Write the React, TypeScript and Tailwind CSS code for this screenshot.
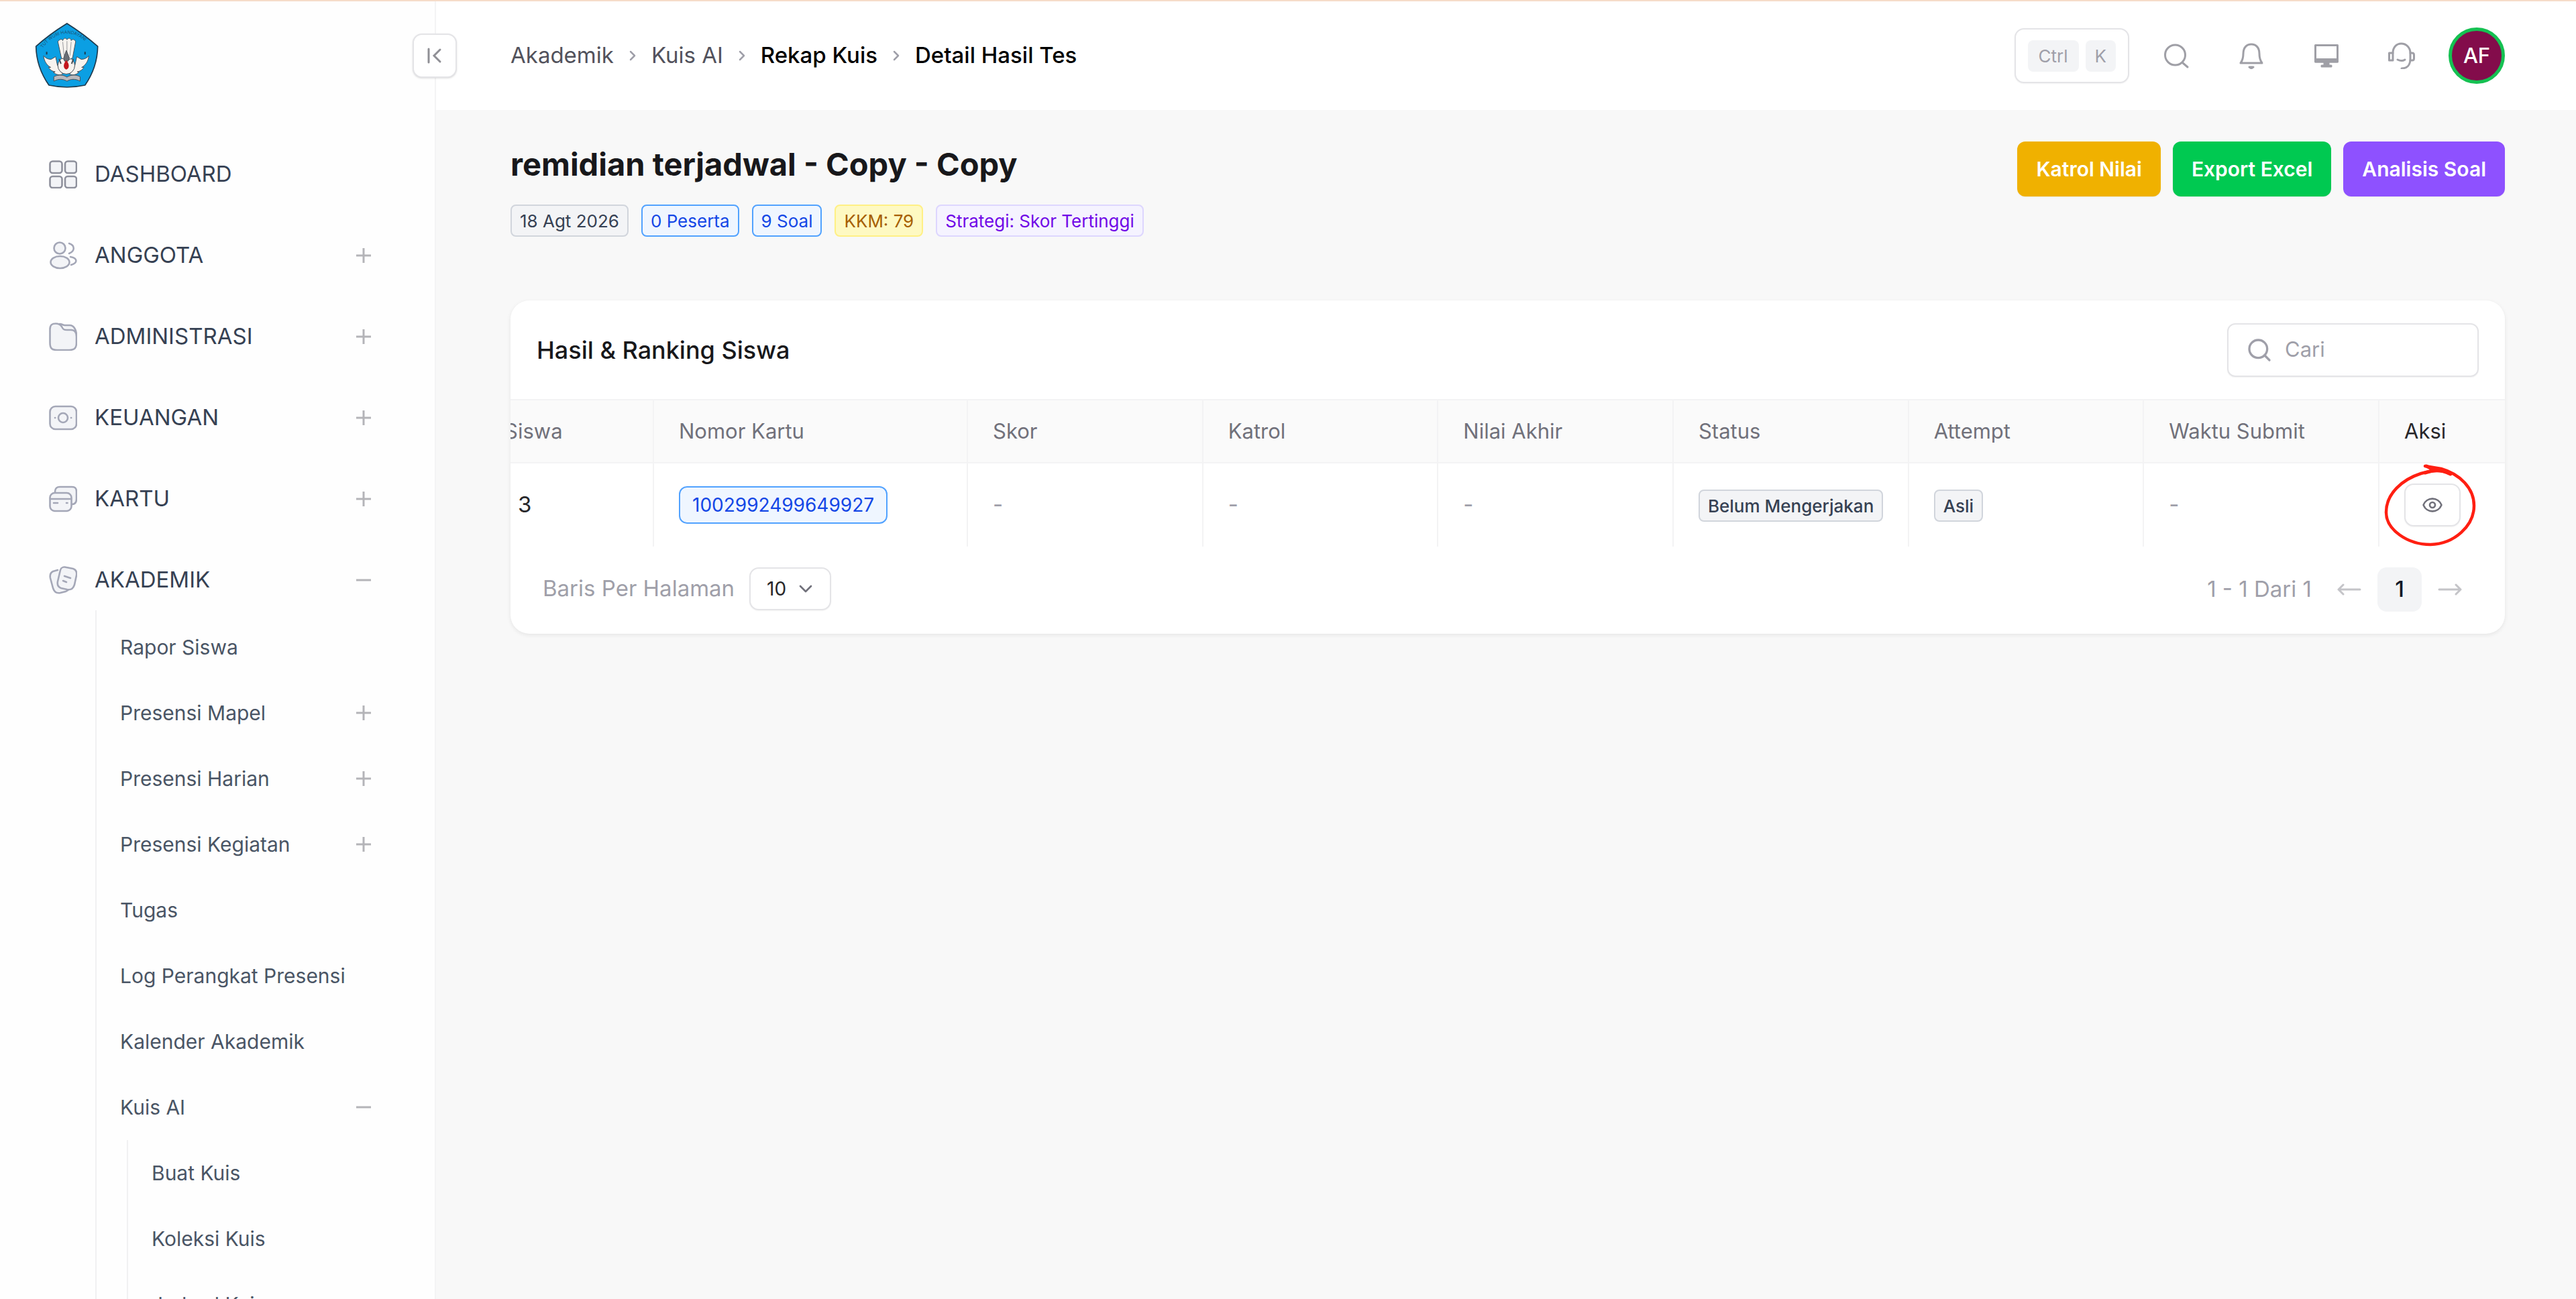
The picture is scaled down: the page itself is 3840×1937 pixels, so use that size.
import { clsx } from "clsx";
import { ChevronDown, ChevronRight, Eye, Search } from "lucide-react";
import type { ReactNode } from "react";

type SubItem = { label: string; toggle?: "plus" | "minus"; children?: string[] };

const akademikItems: SubItem[] = [
  { label: "Rapor Siswa" },
  { label: "Presensi Mapel", toggle: "plus" },
  { label: "Presensi Harian", toggle: "plus" },
  { label: "Presensi Kegiatan", toggle: "plus" },
  { label: "Tugas" },
  { label: "Log Perangkat Presensi" },
  { label: "Kalender Akademik" },
  {
    label: "Kuis AI",
    toggle: "minus",
    children: ["Buat Kuis", "Koleksi Kuis", "Jadwal Kuis"],
  },
];

const breadcrumb = [
  { label: "Akademik", strong: false },
  { label: "Kuis AI", strong: false },
  { label: "Rekap Kuis", strong: true },
  { label: "Detail Hasil Tes", strong: true },
];

const tags = [
  { label: "18 Agt 2026", style: "border-gray-300 bg-gray-100 text-gray-700" },
  { label: "0 Peserta", style: "border-blue-400 bg-blue-50 text-blue-700" },
  { label: "9 Soal", style: "border-blue-400 bg-blue-50 text-blue-700" },
  { label: "KKM: 79", style: "border-yellow-200 bg-yellow-100 text-yellow-700" },
  {
    label: "Strategi: Skor Tertinggi",
    style: "border-violet-200 bg-violet-50 text-violet-700",
  },
];

const columns = [
  "Siswa",
  "Nomor Kartu",
  "Skor",
  "Katrol",
  "Nilai Akhir",
  "Status",
  "Attempt",
  "Waktu Submit",
];

function Logo() {
  return (
    <svg viewBox="66 42 284 292" className="h-[97px] w-[95px]" aria-hidden="true">
      <path
        d="M209 45 C255 74 302 108 347 148 C346 210 326 270 290 322 C236 334 182 334 128 322 C92 270 71 210 70 148 C114 108 162 74 209 45Z"
        fill="#0b9fe3"
        stroke="#1f3a4d"
        strokeWidth="5"
      />
      <path id="motto" d="M98 160 C160 68 258 68 320 160" fill="none" />
      <text fill="#1c5577" fontSize="20" fontFamily="Inter, sans-serif">
        <textPath href="#motto" startOffset="4">
          TUT WURI HANDAYANI
        </textPath>
      </text>
      <g stroke="#4a4f57" strokeWidth="3" strokeLinejoin="round">
        <path
          d="M104 190 C112 200 124 206 138 206 L158 194 L166 232 L190 272 C176 280 158 274 148 264 L156 262 C142 260 132 252 126 242 L136 242 C120 234 106 214 104 190Z"
          fill="#f6f3ef"
        />
        <path
          d="M307 190 C299 200 287 206 273 206 L253 194 L245 232 L221 272 C235 280 253 274 263 264 L255 262 C269 260 279 252 285 242 L275 242 C291 234 305 214 307 190Z"
          fill="#f6f3ef"
        />
        <circle cx="206" cy="234" r="38" fill="#f6f3ef" />
        <path
          d="M168 126 C176 116 186 112 190 122 C194 110 204 108 209 118 C216 108 226 110 228 122 C234 112 244 118 248 126 L234 200 L208 212 L184 200Z"
          fill="#f6f3ef"
        />
        <path d="M190 128 L196 190 M209 124 V188 M228 128 L222 190" fill="none" stroke="#9a9a9d" />
        <path d="M194 200 L206 166 L220 200 L214 214 H198Z" fill="#6a6d74" />
        <path d="M174 204 L182 226 M238 204 L230 226" fill="none" strokeWidth="6" />
        <path
          d="M150 284 C172 272 194 276 209 286 C224 276 246 272 268 284 V304 C246 292 226 294 209 304 C192 294 172 292 150 304Z"
          fill="#b9b9bd"
        />
      </g>
      <path d="M206 210 C220 226 222 246 206 252 C190 246 192 226 206 210Z" fill="#c3161c" />
      <path d="M118 184 V172 M290 184 V172" stroke="#1f3a4d" strokeWidth="6" />
    </svg>
  );
}

function MenuIcon({ children }: { children: ReactNode }) {
  return (
    <svg
      viewBox="0 0 42 42"
      className="size-[42px] shrink-0 text-[#a4a7b7]"
      fill="#f3f4f7"
      stroke="currentColor"
      strokeWidth="2.6"
      strokeLinecap="round"
      strokeLinejoin="round"
      aria-hidden="true"
    >
      {children}
    </svg>
  );
}

const menu: { label: string; icon: ReactNode; toggle?: "plus" | "minus" }[] = [
  {
    label: "DASHBOARD",
    icon: (
      <g stroke="#8e909c">
        <rect x="1.5" y="1.5" width="18" height="17.5" rx="4" />
        <rect x="24" y="1.5" width="17" height="17.5" rx="4" />
        <rect x="1.5" y="24" width="18" height="17" rx="4" />
        <rect x="24" y="24" width="17" height="17" rx="4" />
      </g>
    ),
  },
  {
    label: "ANGGOTA",
    toggle: "plus",
    icon: (
      <>
        <circle cx="16" cy="10" r="8.5" />
        <ellipse cx="16.500" cy="31" rx="14" ry="9" />
        <path d="M30 3 C39 6 39 14 30 18" fill="none" />
        <path d="M32 23 C43 25 43 32 33 35" fill="none" />
      </>
    ),
  },
  {
    label: "ADMINISTRASI",
    toggle: "plus",
    icon: (
      <>
        <path d="M16 2 C20 2 20 4 24 4 H31 C37 4 41 11 41 19" />
        <path d="M1.500 10 C1.500 3 5 1.500 10 1.500 C15 1.500 17 3 19 6 C21 10 22 11 27 11 H33 C38 11 41 15 41 21 V30 C41 38 38 41 30 41 H12 C4 41 1.500 38 1.500 30Z" />
      </>
    ),
  },
  {
    label: "KEUANGAN",
    toggle: "plus",
    icon: (
      <>
        <rect x="1.500" y="4" width="39.500" height="34" rx="8" />
        <circle cx="21" cy="21" r="7" />
        <path d="M9 21 H9.200 M33 21 H33.200" />
      </>
    ),
  },
  {
    label: "KARTU",
    toggle: "plus",
    icon: (
      <>
        <path d="M9 12 V10 C9 5 12 3 16 3 H34 C39 3 41 5 41 10 V21 C41 26 39 29 34 29" />
        <rect x="1.500" y="12" width="32" height="27" rx="7" />
        <path d="M2 21 H33 M7 27 H13 M26 27 H27.500" />
      </>
    ),
  },
  {
    label: "AKADEMIK",
    toggle: "minus",
    icon: (
      <>
        <path d="M13 6 L6 8 C2 10 1 13 2 18 L6 33 C8 39 11 41 17 40 L25 38 C28 37 29 36 30 34" />
        <path d="M17 6 C18 2 22 1 26 2 L36 4 C41 6 42 9 41 14 L38 28 C36 34 33 36 27 35 L18 33 C13 31 12 28 13 23Z" />
        <path d="M23 15 L32 18 M21 22 L26 24" />
      </>
    ),
  },
];

function Toggle({ kind }: { kind: "plus" | "minus" }) {
  return (
    <svg viewBox="0 0 24 24" className="size-6" stroke="#b4b4b8" strokeWidth="3" aria-hidden="true">
      <path d={kind === "plus" ? "M1 12 H23 M12 1 V23" : "M1 12 H23"} />
    </svg>
  );
}

function Sidebar() {
  return (
    <aside className="relative flex w-[650px] shrink-0 flex-col border-r-2 border-[#f4f4f5] bg-[#fefefe]">
      <div className="h-[213px] shrink-0 pt-8 pl-[52px]">
        <Logo />
      </div>
      <button
        type="button"
        aria-label="Tutup menu"
        className="absolute top-12 -right-[33px] flex size-[66px] items-center justify-center rounded-[14px] border-2 border-zinc-200 bg-white shadow-sm"
      >
        <svg viewBox="0 0 24 24" className="size-6" fill="none" stroke="#8f8f95" strokeWidth="3" strokeLinecap="round">
          <path d="M3 2 V22 M20 3 L11 12 L20 21" />
        </svg>
      </button>
      <nav className="pr-[94px] pl-[73px]">
        <ul className="flex flex-col gap-[31px]">
          {menu.map((item) => (
            <li key={item.label}>
              <a href="#" className="flex h-[90px] items-center text-[33px] text-gray-700">
                <MenuIcon>{item.icon}</MenuIcon>
                <span className="ml-[26px] flex-1">{item.label}</span>
                {item.toggle && <Toggle kind={item.toggle} />}
              </a>
              {item.label === "AKADEMIK" && (
                <ul className="ml-[69px] border-l-2 border-[#f1f1f2] pt-1.5 text-[30px] text-[#4a5565]">
                  {akademikItems.map((sub) => (
                    <li key={sub.label} className="pl-[35px]">
                      <a href="#" className="flex h-[98px] items-center justify-between">
                        {sub.label}
                        {sub.toggle && <Toggle kind={sub.toggle} />}
                      </a>
                      {sub.children && (
                        <ul className="ml-2.5 border-l-2 border-[#f1f1f2] pl-[35px]">
                          {sub.children.map((child) => (
                            <li key={child}>
                              <a href="#" className="flex h-[98px] items-center">
                                {child}
                              </a>
                            </li>
                          ))}
                        </ul>
                      )}
                    </li>
                  ))}
                </ul>
              )}
            </li>
          ))}
        </ul>
      </nav>
    </aside>
  );
}

function HeaderButton({ label, children }: { label: string; children: ReactNode }) {
  return (
    <button type="button" aria-label={label}>
      <svg
        viewBox="0 0 40 40"
        className="size-10"
        fill="none"
        stroke="#9f9fa6"
        strokeWidth="3"
        strokeLinecap="round"
        strokeLinejoin="round"
      >
        {children}
      </svg>
    </button>
  );
}

function Header() {
  return (
    <header className="flex h-[162px] shrink-0 items-center justify-between bg-white pr-[106px] pl-[111px]">
      <nav aria-label="Breadcrumb">
        <ol className="flex items-center gap-5 text-[33px]">
          {breadcrumb.map((item, i) => (
            <li key={item.label} className="flex items-center gap-5">
              {i > 0 && <ChevronRight className="-mx-1 size-6 text-zinc-400" strokeWidth={2.5} />}
              <a href="#" className={clsx(item.strong ? "font-medium text-black" : "text-zinc-600")}>
                {item.label}
              </a>
            </li>
          ))}
        </ol>
      </nav>
      <div className="flex items-center gap-[50px]">
        <button
          type="button"
          aria-label="Pencarian cepat"
          className="flex h-[82px] items-center gap-2.5 rounded-[14px] border-2 border-zinc-200 bg-white px-[18px] text-[26px] text-zinc-400 shadow-xs"
        >
          <kbd className="rounded-lg bg-gray-100 px-4 py-1 font-[Inter]">Ctrl</kbd>
          <kbd className="rounded-lg bg-gray-100 px-3.5 py-1 font-[Inter]">K</kbd>
        </button>
        <div className="flex items-center gap-[72px]">
          <HeaderButton label="Cari">
            <circle cx="18.500" cy="19" r="15" />
            <path d="M30 31 L37 37" />
          </HeaderButton>
          <HeaderButton label="Notifikasi">
            <path d="M4 31 C7 27 8 23 8 17 C8 8 13 3 20 3 C27 3 32 8 32 17 C32 23 33 27 36 31Z" />
            <path d="M17 37 H23 L20 39Z" fill="#9f9fa6" />
          </HeaderButton>
          <HeaderButton label="Layar">
            <path d="M3.500 4.500 H36.500 V29 H3.500Z" />
            <path d="M4 25.500 H36 V29 H4Z M17 30 H23 V35 H27 V36 H13 V35 H17Z" fill="#9f9fa6" />
          </HeaderButton>
          <HeaderButton label="Bantuan">
            <path d="M7 26 V16 C7 8 12 2 19.500 2 C27 2 33 8 33 16 V25 C33 34 28 39 20 39" />
            <path d="M7 16 H1.500 V27 H7 M33 16 H36 C38 16 38.500 17 38.500 19 V24 C38.500 26 38 27 36 27 H33" />
            <path d="M14 26 C18 28 22 28 25 26" />
          </HeaderButton>
        </div>
        <button
          type="button"
          aria-label="Profil"
          className="flex size-[84px] items-center justify-center rounded-full border-[5px] border-[#15c152] bg-[#830c4b] text-[31px] font-medium text-white"
        >
          AF
        </button>
      </div>
    </header>
  );
}

function Badge({ children }: { children: ReactNode }) {
  return (
    <span className="inline-flex h-12 items-center rounded-lg border-2 border-gray-300 bg-gray-100 px-3 text-[26px] font-medium whitespace-nowrap text-gray-700">
      {children}
    </span>
  );
}

function ResultTable() {
  const cell = "border-r-2 border-[#f3f3f4] px-[37px]";
  return (
    <div className="flex justify-end overflow-hidden">
      <table className="w-[calc(100%+46px)] shrink-0 table-fixed border-separate border-spacing-0 text-left">
        <colgroup>
          <col className="w-[260px]" />
          <col className="w-[468px]" />
          <col span={6} />
          <col className="w-[187px]" />
        </colgroup>
        <thead>
          <tr className="h-[96px] bg-[#fafafa] text-[31px] text-zinc-500">
            {columns.map((name) => (
              <th key={name} scope="col" className="border-y-2 border-r-2 border-[#f3f3f4] px-[37px] font-normal">
                {name}
              </th>
            ))}
            <th scope="col" className="border-y-2 border-[#f3f3f4] px-[37px] font-normal text-zinc-800">
              Aksi
            </th>
          </tr>
        </thead>
        <tbody>
          <tr className="h-[124px] text-[33px] text-zinc-400">
            <td className="border-r-2 border-[#f3f3f4] pl-[57px] text-zinc-800">3</td>
            <td className={cell}>
              <span className="inline-flex h-14 items-center rounded-xl border-2 border-blue-400 bg-blue-50 px-[18px] text-[28px] text-blue-700">
                1002992499649927
              </span>
            </td>
            <td className={cell}>-</td>
            <td className={cell}>-</td>
            <td className={cell}>-</td>
            <td className={cell}>
              <Badge>Belum Mengerjakan</Badge>
            </td>
            <td className={cell}>
              <Badge>Asli</Badge>
            </td>
            <td className={cell}>-</td>
            <td className="px-[37px]">
              <div className="relative w-fit">
                <button
                  type="button"
                  aria-label="Lihat detail"
                  className="flex h-16 w-[84px] items-center justify-center rounded-[14px] border-2 border-zinc-200 bg-white shadow-xs"
                >
                  <Eye className="size-8 text-zinc-500" strokeWidth={2} />
                </button>
                {/* hand-drawn marker around the action */}
                <svg
                  viewBox="0 0 142 126"
                  className="pointer-events-none absolute -top-[31px] -left-[33px] h-[126px] w-[142px]"
                  fill="none"
                  stroke="#ff1f12"
                  strokeLinecap="round"
                  strokeLinejoin="round"
                >
                  <path
                    d="M100 16 C88 9 72 12 58 16 C30 25 6 46 6 74 C6 100 38 122 72 122 C108 121 137 94 137 64 C137 38 116 17 88 9 L64 5"
                    strokeWidth="4.500"
                  />
                  <path d="M66 5 L78 11 L64 15 C76 10 90 11 102 17" strokeWidth="5" />
                </svg>
              </div>
            </td>
          </tr>
        </tbody>
      </table>
    </div>
  );
}

function PageArrow({ label, path }: { label: string; path: string }) {
  return (
    <button type="button" aria-label={label}>
      <svg
        viewBox="0 0 36 20"
        className="h-5 w-9"
        fill="none"
        stroke="#c4c4c8"
        strokeWidth="3"
        strokeLinecap="round"
        strokeLinejoin="round"
      >
        <path d={path} />
      </svg>
    </button>
  );
}

export default function App() {
  return (
    <div className="flex h-screen overflow-hidden border-t-2 border-[#f6dcc9] bg-[#f8f8f8] font-[Inter,sans-serif]">
      <Sidebar />
      <div className="flex min-w-0 flex-1 flex-col">
        <Header />
        <main className="flex-1 pt-[47px] pr-[106px] pl-[111px]">
          <div className="flex items-start justify-between">
            <div>
              <h1 className="text-[47px] leading-[68px] font-bold text-zinc-900">
                remidian terjadwal - Copy - Copy
              </h1>
              <div className="mt-[26px] flex gap-[19px]">
                {tags.map((tag) => (
                  <span
                    key={tag.label}
                    className={clsx("flex h-12 items-center rounded-lg border-2 px-3 text-[26px]", tag.style)}
                  >
                    {tag.label}
                  </span>
                ))}
              </div>
            </div>
            <div className="flex gap-[18px] text-[30px] font-semibold text-white">
              <button type="button" className="h-[82px] rounded-xl bg-yellow-500 px-7 shadow-xs">
                Katrol Nilai
              </button>
              <button type="button" className="h-[82px] rounded-xl bg-green-500 px-7 shadow-xs">
                Export Excel
              </button>
              <button type="button" className="h-[82px] rounded-xl bg-violet-500 px-7 shadow-xs">
                Analisis Soal
              </button>
            </div>
          </div>

          <section className="mt-[95px] rounded-[28px] bg-white shadow-[0_2px_6px_rgba(0,0,0,0.08)]">
            <div className="flex h-[147px] items-center justify-between px-[39px]">
              <h2 className="text-[36px] font-medium text-zinc-900">Hasil &amp; Ranking Siswa</h2>
              <label className="flex h-20 w-[375px] items-center gap-[18px] rounded-xl border-2 border-zinc-200 bg-white px-[26px] shadow-xs">
                <Search className="size-10 shrink-0 text-zinc-400" strokeWidth={2} />
                <input
                  type="text"
                  placeholder="Cari"
                  aria-label="Cari"
                  className="w-full min-w-0 text-[31px] outline-none placeholder:text-zinc-400"
                />
              </label>
            </div>
            <ResultTable />
            <div className="flex items-start justify-between pt-[31px] pr-16 pb-[33px] pl-12 text-[33px] text-zinc-400">
              <div className="flex items-center gap-[22px]">
                <label htmlFor="rows">Baris Per Halaman</label>
                <div className="relative">
                  <select
                    id="rows"
                    defaultValue="10"
                    className="h-16 w-[122px] appearance-none rounded-[14px] border-2 border-zinc-200 bg-white pl-6 text-[28px] text-zinc-800 shadow-xs"
                  >
                    <option>10</option>
                  </select>
                  <ChevronDown className="pointer-events-none absolute top-4 right-[22px] size-8 text-zinc-500" strokeWidth={2} />
                </div>
              </div>
              <div className="flex items-center">
                <span className="mr-[38px]">1 - 1 Dari 1</span>
                <PageArrow label="Sebelumnya" path="M34 10 H2 M9 3 L2 10 L9 17" />
                <button type="button" className="mx-6 size-[66px] rounded-[14px] bg-gray-100 font-medium text-gray-900">
                  1
                </button>
                <PageArrow label="Berikutnya" path="M2 10 H34 M27 3 L34 10 L27 17" />
              </div>
            </div>
          </section>
        </main>
      </div>
    </div>
  );
}
